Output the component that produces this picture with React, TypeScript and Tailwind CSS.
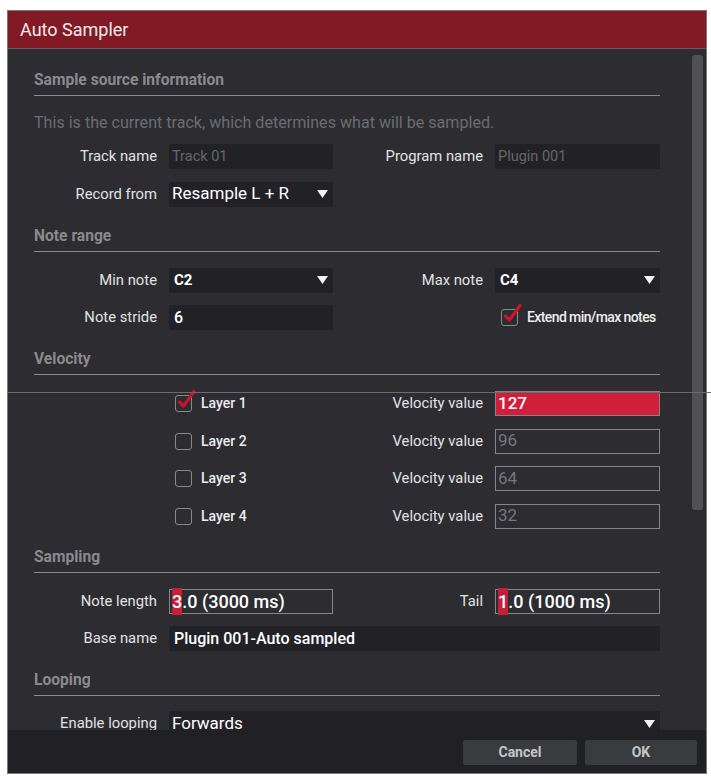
import React from "react";

function Arrow() {
  return (
    <svg className="ml-auto h-[8px] w-[11px] shrink-0" viewBox="0 0 11 8">
      <polygon points="0,0 11,0 5.5,8" fill="#f2f2f2" />
    </svg>
  );
}

function Check({ checked }: { checked?: boolean }) {
  return (
    <span className="relative inline-block h-[17px] w-[17px] shrink-0 rounded-[3px] border-[1.5px] border-[#8a8a8c]">
      {checked && (
        <svg className="absolute -top-[7px] left-[0px] h-[22px] w-[22px]" viewBox="0 0 22 22">
          <path d="M3.5 13 L7.5 17 L18 2.5" stroke="#c8142f" strokeWidth="3.2" fill="none" strokeLinecap="round" strokeLinejoin="round" />
        </svg>
      )}
    </span>
  );
}

function Label({ children, w = "w-[123px]" }: { children: React.ReactNode; w?: string }) {
  return <div className={`${w} shrink-0 text-right text-[14.8px] text-[#e2e2e4]`}>{children}</div>;
}

function SectionHead({ title, mt }: { title: string; mt: string }) {
  return (
    <div className={`${mt} border-b border-[#8c8c8e] pb-[5px] text-[15.6px] leading-[20px] font-bold text-[#8a8a8e]`}>
      {title}
    </div>
  );
}

export default function App() {
  return (
    <div className="relative h-[780px] w-[711px] bg-white [font-family:Roboto,'Liberation_Sans',sans-serif]">
      <div className="absolute left-[7px] top-[10px] flex h-[764px] w-[700px] flex-col overflow-hidden border border-[#7a7a7c] bg-[#2c2c31]">
        {/* title bar */}
        <div className="flex h-[38px] shrink-0 items-center border-b border-[#6a5a5c] bg-[#821a26] pl-[12px] text-[18px] text-[#f3eaea]">
          Auto Sampler
        </div>

        {/* scrolling body */}
        <div className="relative flex-1 overflow-hidden">
          <div className="ml-[26px] w-[626px] pt-[21px]">
            <SectionHead title="Sample source information" mt="mt-0" />
            <div className="mt-[17px] text-[16.1px] leading-[20px] text-[#6c6c70]">
              This is the current track, which determines what will be sampled.
            </div>
            <div className="mt-[11px] flex flex-col gap-[12.5px]">
              <div className="flex h-[25px] items-center">
                <Label>Track name</Label>
                <div className="ml-[12px] flex h-[25px] w-[164px] items-center rounded-[2px] bg-[#222226] px-[3px] text-[14.5px] text-[#66666a]">
                  Track 01
                </div>
                <Label w="w-[150px]">Program name</Label>
                <div className="ml-[12px] flex h-[25px] w-[165px] items-center rounded-[2px] bg-[#222226] px-[3px] text-[14.5px] text-[#66666a]">
                  Plugin 001
                </div>
              </div>
              <div className="flex h-[25px] items-center">
                <Label>Record from</Label>
                <div className="ml-[12px] flex h-[25px] w-[164px] items-center rounded-[2px] bg-[#222226] pl-[3px] pr-[5px] text-[17px] text-white">
                  Resample L + R
                  <Arrow />
                </div>
              </div>
            </div>

            <SectionHead title="Note range" mt="mt-[19px]" />
            <div className="mt-[16px] flex flex-col gap-[12.5px]">
              <div className="flex h-[25px] items-center">
                <Label>Min note</Label>
                <div className="ml-[12px] flex h-[25px] w-[164px] items-center rounded-[2px] bg-[#222226] pl-[5px] pr-[5px] text-[15px] font-bold text-white">
                  C2
                  <Arrow />
                </div>
                <Label w="w-[150px]">Max note</Label>
                <div className="ml-[12px] flex h-[25px] w-[165px] items-center rounded-[2px] bg-[#222226] pl-[5px] pr-[5px] text-[15px] font-bold text-white">
                  C4
                  <Arrow />
                </div>
              </div>
              <div className="flex h-[25px] items-center">
                <Label>Note stride</Label>
                <div className="ml-[12px] flex h-[25px] w-[164px] items-center rounded-[2px] bg-[#222226] pl-[5px] text-[16px] font-medium text-white">
                  6
                </div>
                <div className="ml-[162px] flex w-[165px] items-center gap-[9px] whitespace-nowrap pl-[6px]">
                  <Check checked />
                  <span className="text-[14px] font-medium tracking-[-0.6px] text-[#ededed]">Extend min/max notes</span>
                </div>
              </div>
            </div>

            <SectionHead title="Velocity" mt="mt-[19px]" />
            <div className="mt-[16px] flex flex-col gap-[12.5px]">
              {[
                { n: 1, v: "127", on: true },
                { n: 2, v: "96" },
                { n: 3, v: "64" },
                { n: 4, v: "32" },
              ].map((l) => (
                <div key={l.n} className="flex h-[25px] items-center">
                  <div className="ml-[141px] flex w-[158px] items-center gap-[9px]">
                    <Check checked={l.on} />
                    <span className="text-[14px] font-medium text-[#ededed]">Layer {l.n}</span>
                  </div>
                  <Label w="w-[150px]">Velocity value</Label>
                  <div
                    className={`ml-[12px] flex h-[25px] w-[165px] items-center border-[1.5px] border-[#85858a] px-[2px] text-[17px] ${
                      l.on ? "bg-[#d11f3b] font-medium text-white" : "text-[#77777b]"
                    }`}
                  >
                    {l.v}
                  </div>
                </div>
              ))}
            </div>

            <SectionHead title="Sampling" mt="mt-[18px]" />
            <div className="mt-[16px] flex flex-col gap-[12.5px]">
              <div className="flex h-[25px] items-center">
                <Label>Note length</Label>
                <div className="ml-[12px] flex h-[25px] w-[164px] items-center border border-[#85858a] px-[2px] text-[18px] font-medium text-white">
                  <span className="bg-[#c4203a]">3</span>.0 (3000 ms)
                </div>
                <Label w="w-[150px]">Tail</Label>
                <div className="ml-[12px] flex h-[25px] w-[165px] items-center border border-[#85858a] px-[2px] text-[18px] font-medium text-white">
                  <span className="bg-[#c4203a]">1</span>.0 (1000 ms)
                </div>
              </div>
              <div className="flex h-[25px] items-center">
                <Label>Base name</Label>
                <div className="ml-[12px] flex h-[25px] flex-1 items-center rounded-[2px] bg-[#222226] pl-[5px] text-[16px] font-medium text-white">
                  Plugin 001-Auto sampled
                </div>
              </div>
            </div>

            <SectionHead title="Looping" mt="mt-[19px]" />
            <div className="mt-[15px] flex h-[25px] items-center">
              <Label>Enable looping</Label>
              <div className="ml-[12px] flex h-[25px] flex-1 items-center rounded-[2px] bg-[#222226] pl-[3px] pr-[5px] text-[17px] text-white">
                Forwards
                <Arrow />
              </div>
            </div>
          </div>

          {/* scrollbar */}
          <div className="absolute right-[3px] top-[6px] h-[455px] w-[11px] rounded-[3px] bg-[#505055]" />
        </div>

        {/* footer */}
        <div className="flex h-[43px] shrink-0 items-start justify-end gap-[8px] bg-[#212125] pr-[9px] pt-[10px]">
          <button className="h-[25px] w-[114px] rounded-[2px] bg-[#3a3b3f] text-[14px] font-bold text-[#c6c6c8]">Cancel</button>
          <button className="h-[25px] w-[112px] rounded-[2px] bg-[#3a3b3f] text-[14px] font-bold text-[#c6c6c8]">OK</button>
        </div>
      </div>

      {/* stray guide line across the window */}
      <div className="absolute left-[7px] right-0 top-[392px] h-px bg-[#6c6c70]" />
    </div>
  );
}
